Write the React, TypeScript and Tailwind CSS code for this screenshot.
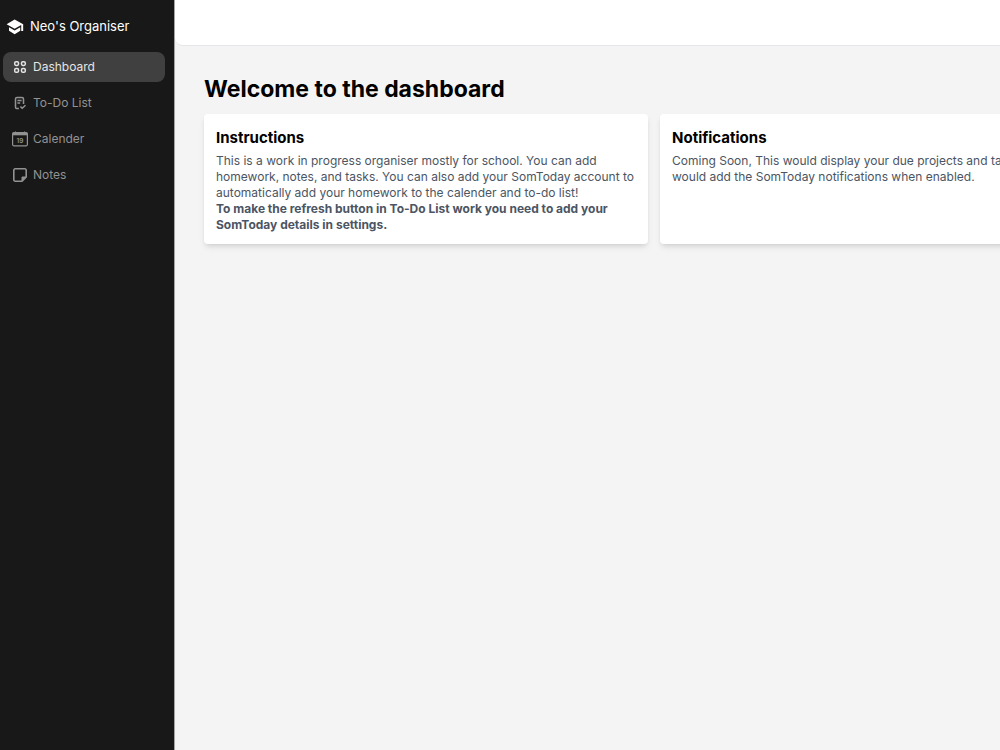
import React, {useState} from 'react'
import clsx from 'clsx'

function SchoolIcon() {
    return (
        <svg viewBox="0 0 24 24" className="h-[18px] w-[18px]" fill="currentColor" aria-hidden="true">
            <path d="M11.5 2 .8 8.2l10.7 6.2 8.8-5v7.8h2.6V8.2L11.5 2Z"/>
            <path d="M4 12.4v4.6l7.5 4.6 7.5-4.6v-4.6l-7.5 4.3L4 12.4Z"/>
        </svg>
    )
}

function DashboardIcon() {
    return (
        <svg viewBox="0 0 16 16" className="h-4 w-4" fill="none" stroke="currentColor" strokeWidth="1.5" aria-hidden="true">
            <rect x="2.7" y="2.7" width="3.8" height="3.8" rx="1.4"/>
            <rect x="9.5" y="2.7" width="3.8" height="3.8" rx="1.4"/>
            <rect x="2.7" y="9.5" width="3.8" height="3.8" rx="1.4"/>
            <rect x="9.5" y="9.5" width="3.8" height="3.8" rx="1.4"/>
        </svg>
    )
}

function TodoIcon() {
    return (
        <svg viewBox="0 0 16 16" className="h-4 w-4" fill="none" stroke="currentColor" strokeWidth="1.5" aria-hidden="true">
            <path d="M11.5 9V4A1.5 1.5 0 0 0 10 2.5H5A1.5 1.5 0 0 0 3.5 4v8.2a1.2 1.2 0 0 0 1.2 1.2h2.2"/>
            <path d="M5.4 5.5h4.2M5.4 8h2.8" strokeWidth="1.3"/>
            <path d="m8.4 11.4 1.8 1.9 3.3-3"/>
        </svg>
    )
}

function CalendarIcon() {
    return (
        <svg viewBox="0 0 16 16" className="h-4 w-4" fill="none" stroke="currentColor" aria-hidden="true">
            <rect x="0.6" y="1.6" width="14.8" height="13.2" rx="1.2" strokeWidth="1.2"/>
            <path d="M1 3h14" strokeWidth="2.6"/>
            <path d="M3.5 0.5v1.5M12.5 0.5v1.5"/>
            <text x="8" y="11.5" textAnchor="middle" fontSize="6.5" fontWeight="600" fill="currentColor" stroke="none">19</text>
        </svg>
    )
}

function NotesIcon() {
    return (
        <svg viewBox="0 0 16 16" className="h-4 w-4" fill="none" stroke="currentColor" strokeWidth="1.6" strokeLinejoin="round" aria-hidden="true">
            <path d="M3.2 1.8h9.6a1.4 1.4 0 0 1 1.4 1.4V10L10 14.2H3.2a1.4 1.4 0 0 1-1.4-1.4V3.2a1.4 1.4 0 0 1 1.4-1.4Z"/>
            <path d="M10 14.2V10h4.2L10 14.2Z" fill="currentColor" strokeWidth="1"/>
        </svg>
    )
}

const links = [
    {name: 'Dashboard', href: '#dashboard', icon: DashboardIcon},
    {name: 'To-Do List', href: '#todo', icon: TodoIcon},
    {name: 'Calender', href: '#calender', icon: CalendarIcon},
    {name: 'Notes', href: '#notes', icon: NotesIcon},
]

function Sidebar() {
    const [active, setActive] = useState('Dashboard')

    return (
        <aside className="w-[174px] flex-none bg-[#181818] pt-[13px]">
            <div className="flex h-7 items-center gap-1.5 px-1.5 text-[13px] text-white">
                <SchoolIcon/>
                <span>Neo's Organiser</span>
            </div>
            <nav className="mt-[11px] flex flex-col gap-1.5 pl-[3px] pr-[9px]">
                {links.map((link) => (
                    <a
                        key={link.name}
                        href={link.href}
                        onClick={() => setActive(link.name)}
                        className={clsx(
                            'flex h-[30px] items-center gap-[5px] rounded-lg px-[9px] text-xs',
                            active === link.name ? 'bg-[#404040] text-[#e5e5e5]' : 'text-[#929292] hover:bg-[#2a2a2a]'
                        )}
                    >
                        <link.icon/>
                        <span>{link.name}</span>
                    </a>
                ))}
            </nav>
        </aside>
    )
}

function Card({title, children}: { title: string, children: React.ReactNode }) {
    return (
        <section className="w-[444px] flex-none rounded-sm bg-white px-3 pt-3 pb-[11px] shadow-md">
            <h2 className="text-[15px] leading-6 font-bold text-black">{title}</h2>
            <p className="mt-[3px] text-xs text-[#4b5563]">{children}</p>
        </section>
    )
}

export default function App() {
    return (
        <div className="flex min-h-screen bg-[#f4f4f4] font-['Inter',sans-serif]">
            <Sidebar/>
            <div className="min-w-0 flex-1 overflow-hidden border-l border-[#a3a3a3]">
                <header className="h-[46px] rounded-bl-lg border-b border-gray-200 bg-white"/>
                <main className="px-[29px] pt-[27px]">
                    <h1 className="text-[23px] leading-8 font-bold text-black">Welcome to the dashboard</h1>
                    <div className="mt-[9px] flex gap-3">
                        <Card title="Instructions">
                            This is a work in progress organiser mostly for school. You can add homework, notes, and
                            tasks. You can also add your SomToday account to automatically add your homework to the
                            calender and to-do list!
                            <br/>
                            <b>To make the refresh button in To-Do List work you need to add your SomToday details in settings.</b>
                        </Card>
                        <Card title="Notifications">
                            Coming Soon, This would display your due projects and tasks. This also would add the
                            SomToday notifications when enabled.
                        </Card>
                    </div>
                </main>
            </div>
        </div>
    )
}
